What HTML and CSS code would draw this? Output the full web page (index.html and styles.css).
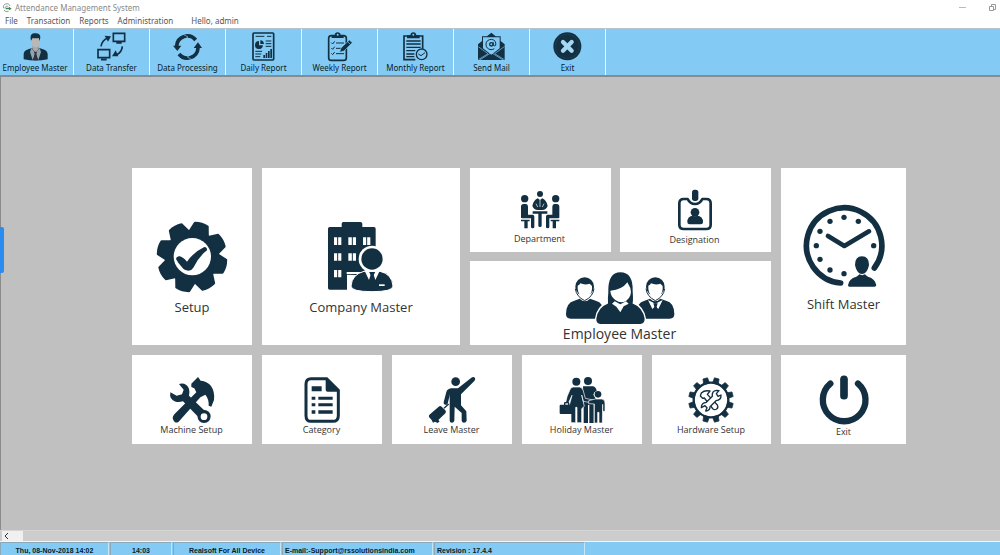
FILE: index.html
```html
<!DOCTYPE html>
<html lang="en">
<head>
<meta charset="utf-8">
<meta name="viewport" content="width=device-width, initial-scale=1">
<title>Attendance Management System</title>
<link rel="stylesheet" href="styles.css">
</head>
<body>
<div class="window">
  <header class="titlebar">
    <svg class="app-icon" viewBox="4 6 30 30" aria-hidden="true">
      <g fill="none" stroke="#8d9a9c" stroke-width="3"><path d="M9 22A10 10 0 0 1 28 15"/><path d="M13 22a6 6 0 0 1 10-5"/><path d="M10 28q6 6 14 3"/></g>
      <path d="M15 20h10v-3l8 6-8 5v-3H15z" fill="#3b8a4c"/>
    </svg>
    <h1 class="title">Attendance Management System</h1>
    <div class="controls">
      <button class="control" aria-label="Minimize"><svg viewBox="0 0 8 8" width="8" height="8"><path d="M0 3.5h7" stroke="#bbb" fill="none"/></svg></button>
      <button class="control" aria-label="Restore"><svg viewBox="0 0 8 8" width="8" height="8"><path d="M1.500 2.500h4v4h-4zM3.500 2.500V.5h4v5h-2" stroke="#999" fill="none"/></svg></button>
    </div>
  </header>

  <nav class="menu">
    <button class="menu-item">File</button>
    <button class="menu-item">Transaction</button>
    <button class="menu-item">Reports</button>
    <button class="menu-item">Administration</button>
    <span class="greeting">Hello, admin</span>
  </nav>

  <div class="toolbar" role="toolbar">
    <button class="tool tool-first">
      <svg class="tool-icon" viewBox="61 95 87 87">
        <path d="M69 177v-16q1-11 14-14l13-5h18l13 5q13 4 14 14v16q-36 7-72 0z" fill="#132f42"/>
        <path d="M95 133h19v13l-9 12-10-12z" fill="#a8a9a8"/>
        <path d="M92 143l12 15-8 21-8-24zM117 143l-12 15 8 21 8-24z" fill="#8ea4b0"/>
        <path d="M100 154h9l-2 7 3 19h-11l3-19z" fill="#3a2f3b"/>
        <path d="M92 115q12-13 26 0v10q-3 16-13 16t-13-16z" fill="#b9b8b5"/>
        <path d="M91 121q-5-19 8-22 20-3 20 12l-2 11-3-9q-10 2-18 0z" fill="#132f42"/>
      </svg>
      <span>Employee Master</span>
    </button>
    <button class="tool">
      <svg class="tool-icon" viewBox="290 95 87 87">
        <g fill="none" stroke="#132f42" stroke-width="5"><path d="M339 99h34v24h-34zM293 148h35v24h-35zM348 128h16M302 178h17"/><path d="M302 138q3-18 20-25M366 138q-1 17-18 26"/></g>
        <path d="M313 106l19 2-9 16zM335 168l11-18 8 18z" fill="#132f42"/>
      </svg>
      <span>Data Transfer</span>
    </button>
    <button class="tool">
      <svg class="tool-icon" viewBox="518 95 87 87">
        <g fill="none" stroke="#132f42" stroke-width="11"><path d="M529 137a32 32 0 0 1 57-18M593 143a32 32 0 0 1-57 18"/></g>
        <path d="M518 136h25l-12 16zM580 143h25l-12-17z" fill="#132f42"/><path d="M547 101l16 9-14 9M577 179l-16-9 14-9" fill="none" stroke="#83cbf4" stroke-width="2"/>
      </svg>
      <span>Data Processing</span>
    </button>
    <button class="tool">
      <svg class="tool-icon" viewBox="746 95 87 87">
        <rect x="758" y="98" width="62" height="81" rx="3" fill="none" stroke="#132f42" stroke-width="5"/>
        <path d="M776 122v13h12a12 12 0 1 1-12-13z" fill="#132f42"/><path d="M780 120v11h11q-1-10-11-11z" fill="#132f42"/>
        <path d="M766 108h26M800 108h13M796 122h17M796 130h17M796 138h17M765 153h20M765 161h18M765 169h15" stroke="#132f42" stroke-width="3" fill="none"/>
        <path d="M789 173v-9h5v9zM796 173v-15h5v15zM803 173v-21h5v21zM810 173v-27h5v27z" fill="#132f42"/>
      </svg>
      <span>Daily Report</span>
    </button>
    <button class="tool">
      <svg class="tool-icon" viewBox="72 95 87 87">
        <rect x="83" y="106" width="53" height="74" rx="8" fill="none" stroke="#132f42" stroke-width="5"/>
        <path d="M92 113v-9h9q1-8 9-8t9 8h9v9z" fill="#132f42"/><circle cx="110" cy="103" r="3" fill="#83cbf4"/>
        <path d="M91 127l4 4 6-8M91 143l4 4 6-8M91 159l4 4 6-8M105 128h24M105 144h16M105 160h24" fill="none" stroke="#132f42" stroke-width="3"/>
        <path d="M116 156l4-13 25-24 9 8-25 25z" fill="#132f42" stroke="#83cbf4" stroke-width="2"/><path d="M139 123l9 9" stroke="#83cbf4" stroke-width="2"/>
      </svg>
      <span>Weekly Report</span>
    </button>
    <button class="tool">
      <svg class="tool-icon" viewBox="302 95 87 87">
        <path d="M345 178h-34v-71h56v38" fill="none" stroke="#132f42" stroke-width="5"/>
        <path d="M320 114v-9h10q1-9 9-9t9 9h10v9z" fill="#132f42"/><circle cx="339" cy="103" r="3" fill="#83cbf4"/>
        <path d="M318 122h43M318 131h43M318 141h43M318 151h27M318 161h24M318 169h24" stroke="#132f42" stroke-width="4"/>
        <circle cx="364" cy="162" r="16" fill="#83cbf4" stroke="#132f42" stroke-width="4"/><path d="M354 161l8 5 12-9" fill="none" stroke="#132f42" stroke-width="3"/>
      </svg>
      <span>Monthly Report</span>
    </button>
    <button class="tool">
      <svg class="tool-icon" viewBox="530 95 87 87">
        <path d="M533 132l12-10v-14h15l13-11 13 11h15v14l12 10v47h-80z" fill="#132f42"/>
        <path d="M548 111h50v33l-25 19-25-19z" fill="#83cbf4"/>
        <path d="M534 139l29 21-29 18M612 139l-29 21 29 18M538 179l35-22 35 22" fill="none" stroke="#83cbf4" stroke-width="2"/>
        <circle cx="573" cy="132" r="5" fill="none" stroke="#132f42" stroke-width="4"/>
        <path d="M579 126v8q2 6 7 1 3-15-12-18-17 1-17 15t15 16q6 0 10-3" fill="none" stroke="#132f42" stroke-width="3"/>
      </svg>
      <span>Send Mail</span>
    </button>
    <button class="tool">
      <svg class="tool-icon" viewBox="757 95 87 87"><circle cx="800" cy="138" r="42" fill="#132f42"/><circle cx="800" cy="138" r="36" fill="none" stroke="#31556c" stroke-width="1"/><path d="M787 125l26 26M813 125l-26 26" stroke="#a5d8f5" stroke-width="13" stroke-linecap="round"/></svg>
      <span>Exit</span>
    </button>
  </div>

  <main class="workspace">
    <button class="side-handle" aria-label="Open side panel"></button>
    <div class="tiles">
      <div class="row row-top">
        <button class="tile tile-tall">
          <svg width="72" height="72" viewBox="78 167 216 216" fill="#132f42">
            <defs><path id="tooth" d="M156 207l10-33q20-6 40 0l10 33z" stroke="#132f42" stroke-width="6" stroke-linejoin="round"/></defs>
            <circle cx="186" cy="275" r="82"/>
            <g><use href="#tooth" transform="rotate(16 186 275)"/><use href="#tooth" transform="rotate(61 186 275)"/><use href="#tooth" transform="rotate(106 186 275)"/><use href="#tooth" transform="rotate(151 186 275)"/><use href="#tooth" transform="rotate(196 186 275)"/><use href="#tooth" transform="rotate(241 186 275)"/><use href="#tooth" transform="rotate(286 186 275)"/><use href="#tooth" transform="rotate(331 186 275)"/></g>
            <circle cx="187" cy="274" r="56" fill="#fff"/>
            <path d="M138 281q2-9 12-8 9 3 21 16 20-29 52-44 9 0 8 10-25 19-41 52-4 8-15 9-12 0-19-10-12-13-18-25z"/>
          </svg>
          <span>Setup</span>
        </button>
        <button class="tile tile-tall">
          <svg width="66" height="72" viewBox="595 167 198 216" fill="#132f42">
            <path d="M595 190q0-5 5-5h36v-10q0-5 5-5h51q6 0 6 5v10h35q5 0 5 5v80l-30 60-56-2v45h-52q-5 0-5-5z"/>
            <path d="M613 216h22v23h-22zM656 216h23v23h-23zM700 216h22v23h-22zM613 264h22v22h-22zM656 264h23v22h-23zM613 314h22v22h-22z" fill="#fff"/>
            <path d="M624 214v125M668 214v75M711 214v27" stroke="#132f42" stroke-width="3"/>
            <path d="M651 320h50v6h-50z" fill="#fff"/><path d="M652 334h20l-8 40h-12z" fill="#fff"/>
            <circle cx="727" cy="281" r="40" fill="#fff"/><circle cx="727" cy="281" r="32"/>
            <path d="M727 379q-63 0-63-17 3-35 39-44h48q36 8 39 44 0 17-63 17z" stroke="#fff" stroke-width="3"/>
            <path d="M704 315l14 29 5-16-5-9h19l-5 9 5 16 14-29z" fill="#fff"/><path d="M720 322h15l-5 9 5 28-8 12-7-12 4-28z"/><path d="M748 357h17v5h-17z" fill="#fff"/>
          </svg>
          <span>Company Master</span>
        </button>
        <div class="cluster">
          <button class="tile tile-mini tile-department">
            <svg width="40" height="40" viewBox="165 76 120 120" fill="#132f42">
              <circle cx="179" cy="102" r="11"/><circle cx="272" cy="102" r="11"/><circle cx="225" cy="88" r="9"/>
              <path d="M168 159v-33q0-8 8-8h7q6 0 6 8v24h14q5 0 5 6v31q0 4-5 4t-5-4v-26h-27zM283 159v-33q0-8-8-8h-7q-6 0-6 8v24h-14q-5 0-5 6v31q0 4 5 4t5-4v-26h27z"/>
              <path d="M168 165h26v5h-6v21h-10v-21h-10zM283 165h-26v5h6v21h10v-21h10zM203 140h44v7h-17v36q0 4-5 4t-5-4v-36h-17z"/>
              <path d="M202 124q3-17 16-23l7 5 7-5q13 6 16 23-5 12-16 12h-14q-11 0-16-12z"/><path d="M213 117l5 10M237 117l-5 10M225 105v22" stroke="#fff" stroke-width="2"/>
            </svg>
            <span>Department</span>
          </button>
          <button class="tile tile-mini">
            <svg width="36" height="42" viewBox="636 71 108 126" fill="#132f42">
              <path d="M668 101h-12q-13 0-13 13v64q0 13 13 13h68q13 0 13-13v-64q0-13-13-13h-12q-7 15-22 15t-22-15z" fill="none" stroke="#132f42" stroke-width="8" stroke-linejoin="round"/>
              <rect x="681" y="73" width="19" height="34" rx="8"/><circle cx="690" cy="141" r="13"/>
              <path d="M667 171q0-20 17-20 6 3 12 0 18 0 18 20 0 6-7 6h-33q-7 0-7-6z"/>
            </svg>
            <span>Designation</span>
          </button>
          <button class="tile tile-wide">
            <svg width="110" height="54" viewBox="300 317 330 162" fill="#132f42">
              <defs><path id="bust" d="M303 446q0-34 25-40l16-6q16 15 31 0l17 6q25 6 25 40 0 14-14 14h-86q-14 0-14-14z"/></defs>
              <use href="#bust"/><circle cx="359" cy="364" r="28"/><path d="M338 361q7-3 8-7 14 6 28 1l7 7v9q-1 20-21 31-20-10-22-31z" fill="#fff"/><path d="M331 370q3 24 28 36 25-12 28-36" fill="none" stroke="#132f42" stroke-width="3"/>
              <use href="#bust" x="211"/><circle cx="571" cy="364" r="28"/><path d="M550 361q7-3 8-7 14 6 28 1l7 7v9q-1 20-21 31-20-10-22-31z" fill="#fff"/><path d="M543 370q3 24 28 36 25-12 28-36" fill="none" stroke="#132f42" stroke-width="3"/>
              <path d="M549 404l13 27 9-8 9 8 13-27-22 11z" fill="#fff"/><path d="M565 414h13l-3 10 4 20-7 15-8-15 4-20z"/>
              <path d="M466 478h-60q-15-2-14-18 5-36 35-47-1-16 1-32-2-62 38-62 41 0 39 59 2 25 0 35 30 11 36 47 0 16-15 18z" stroke="#fff" stroke-width="4"/>
              <path d="M436 376q36-3 51-25l9 17q7 25-13 39-16 9-32-3-15-12-15-28z" fill="#fff"/><path d="M441 415l8-7 17 9 17-9 8 7-15 8-10 18-12-17z" fill="#fff"/>
            </svg>
            <span>Employee Master</span>
          </button>
        </div>
        <button class="tile tile-shift">
          <svg width="82" height="84" viewBox="97 118 246 252" fill="#132f42">
            <path d="M210 355A113 113 0 1 1 311 310" fill="none" stroke="#132f42" stroke-width="17" stroke-linecap="round"/>
            <path d="M172 214l49 30 74-44" fill="none" stroke="#132f42" stroke-width="14" stroke-linecap="round" stroke-linejoin="round"/>
            <circle cx="220" cy="158" r="8"/><circle cx="263" cy="170" r="8"/><circle cx="178" cy="170" r="8"/><circle cx="148" cy="200" r="8"/><circle cx="137" cy="243" r="8"/><circle cx="148" cy="284" r="8"/><circle cx="178" cy="316" r="8"/><circle cx="220" cy="327" r="8"/><circle cx="309" cy="243" r="8"/>
            <path d="M274 275q21 0 21 26-4 19-13 25-8 4-16 0-9-6-13-25 0-26 21-26zM232 362q2-20 25-26 8-4 9-7 9 5 17 0 3 4 9 7 22 6 25 26-2 4-5 4h-76q-4 0-4-4z"/>
          </svg>
          <span>Shift Master</span>
        </button>
      </div>
      <div class="row row-bottom">
        <button class="tile tile-small">
          <svg width="46" height="46" viewBox="117 80 138 138" fill="#132f42">
            <path d="M121 126q-4 23 16 28 9 3 22-1l43 44q2 20 20 21 19 0 20-20-1-18-21-20l-44-42q5-22-8-32-10-7-22-3l14 17-5 14-16 4z"/>
            <circle cx="222" cy="199" r="10" fill="#fff"/>
            <path d="M128 203q0-5 5-11l66-66-6-12-9-4v-10l20-20 8 11q21 2 31 16 12 17 9 42l-8 20-8-3q1-20-10-33l-15 8-65 73q-6 5-12 1-5-5-6-12z"/>
          </svg><span>Machine Setup</span>
        </button>
        <button class="tile tile-small">
          <svg width="46" height="46" viewBox="507 80 138 138" fill="#132f42">
            <path d="M543 85h47l35 35v76q0 17-17 17h-65q-15 0-15-17V101q0-16 15-16z" fill="#fff" stroke="#132f42" stroke-width="9"/>
            <path d="M587 85l41 39h-35q-6 0-6-6zM545 108h30v15h-30zM545 139h11v9h-11zM565 139h43v9h-43zM545 159h11v9h-11zM565 159h43v9h-43zM545 180h11v10h-11zM565 180h43v10h-43z"/>
          </svg><span>Category</span>
        </button>
        <button class="tile tile-small">
          <svg width="46" height="46" viewBox="122 80 138 138" fill="#132f42">
            <circle cx="202" cy="94" r="13"/>
            <path d="M188 114h21l40-32q7-5 11 1 2 5-2 9l-40 40v33l16 18 1 28q-2 6-8 6t-7-6v-23l-21-19-1 42q-2 6-7 6-7 0-7-6v-72l1-8-7 29q-3 5-8 3-5-2-4-7l8-31q3-9 14-11z"/>
            <path d="M181 161l-14 13" stroke="#132f42" stroke-width="4"/><path d="M125 192l26-23q5-4 9 0l11 11q4 5 0 9l-21 20 4 4-6 5-8-4-6 3-4-8-8-9q-2-4 3-8z"/>
          </svg><span>Leave Master</span>
        </button>
        <button class="tile tile-small">
          <svg width="46" height="46" viewBox="510 80 138 138" fill="#132f42">
            <circle cx="597" cy="92" r="12"/><path d="M582 108h30q9 2 11 13-9 3-10 12l8 14-7 8v63h-13v-54h-4v54h-13v-59z"/>
            <circle cx="562" cy="94" r="12"/>
            <path d="M553 110h18q10 1 12 12l6 22 24 5-2 9-28-5-5-19 8 34-8 7v42h-14v-46h-4v46h-14v-48l-5-4 8-30-12 26h-8q4-25 14-43 3-8 10-8z" stroke="#fff" stroke-width="2"/>
            <path d="M515 163h10v-5q0-3 4-3h8q4 0 4 3v5h9q3 0 3 3v22q0 3-3 3h-35q-3 0-3-3v-22q0-3 3-3z"/><path d="M529 159h8v4h-8z" fill="#fff"/>
            <circle cx="627" cy="132" r="10"/><path d="M619 146h20q9 2 9 12v25h-7v-21l-1 56h-10v-32h-4v32h-10v-57l-17-1v-9z" stroke="#fff" stroke-width="2"/>
          </svg><span>Holiday Master</span>
        </button>
        <button class="tile tile-small">
          <svg width="46" height="46" viewBox="129 80 138 138" fill="#132f42">
            <defs><path id="cog" d="M189 99l2-17h14l2 17z" stroke="#132f42" stroke-width="2" stroke-linejoin="round"/></defs>
            <circle cx="198" cy="149" r="52" fill="none" stroke="#132f42" stroke-width="7"/>
            <g><use href="#cog" transform="rotate(15 198 149)"/><use href="#cog" transform="rotate(45 198 149)"/><use href="#cog" transform="rotate(75 198 149)"/><use href="#cog" transform="rotate(105 198 149)"/><use href="#cog" transform="rotate(135 198 149)"/><use href="#cog" transform="rotate(165 198 149)"/><use href="#cog" transform="rotate(195 198 149)"/><use href="#cog" transform="rotate(225 198 149)"/><use href="#cog" transform="rotate(255 198 149)"/><use href="#cog" transform="rotate(285 198 149)"/><use href="#cog" transform="rotate(315 198 149)"/><use href="#cog" transform="rotate(345 198 149)"/></g>
            <g fill="#fff" stroke="#132f42" stroke-width="4" stroke-linejoin="round">
              <path d="M166 137l3-9q9-9 26-6l-8 10 30 32q4 8-2 12t-11 0l-26-33-5 1z"/>
              <path d="M169 172q0-15 15-16l18-18q-2-16 12-18l8 1-8 9 5 8 9-4q1 15-15 17l-18 18q0 12-13 13l4-10-6-6z"/>
            </g>
          </svg><span>Hardware Setup</span>
        </button>
        <button class="tile tile-exit">
          <svg width="50" height="49" viewBox="520 76 150 147"><path d="M554 103a64 64 0 1 0 83 0" fill="none" stroke="#132f42" stroke-width="19" stroke-linecap="round" transform="translate(0 -1)"/><path d="M595 89v49" stroke="#132f42" stroke-width="23" stroke-linecap="round"/></svg>
          <span>Exit</span>
        </button>
      </div>
    </div>
  </main>

  <div class="scrollbar">
    <button class="scroll-left" aria-label="Scroll left"><svg width="5" height="6" viewBox="0 0 5 6"><path d="M4 0L1 3 4 6" fill="none" stroke="#333"/></svg></button>
  </div>

  <footer class="status">
    <span class="panel panel-date">Thu, 08-Nov-2018 14:02</span>
    <span class="panel panel-time">14:03</span>
    <span class="panel panel-device">Realsoft For All Device</span>
    <span class="panel panel-mail">E-mail:-Support@rssolutionsindia.com</span>
    <span class="panel panel-revision">Revision : 17.4.4</span>
  </footer>
</div>
</body>
</html>
```
FILE: styles.css
```css
* { box-sizing: border-box; }

body {
  margin: 0;
  background: #fff;
  color: #333;
  font-family: "Open Sans", "Noto Sans", sans-serif;
}

button {
  margin: 0;
  padding: 0;
  border: 0;
  background: transparent;
  color: inherit;
  font: inherit;
  white-space: nowrap;
}

svg { display: block; flex: none; overflow: visible; }

.window {
  display: flex;
  flex-direction: column;
  min-height: 100vh;
}

.titlebar {
  display: flex;
  align-items: center;
  height: 15px;
  padding: 0 4px 0 2px;
}

.app-icon { width: 10px; height: 10px; }

.title {
  flex: 1;
  margin: 0 0 0 3px;
  color: #8a8a8a;
  font-family: "Noto Sans", sans-serif;
  font-size: 8px;
  font-weight: 400;
  line-height: 14px;
}

.controls { display: flex; gap: 21px; }
.control { display: flex; }

.menu {
  display: flex;
  align-items: center;
  gap: 9px;
  height: 13px;
  padding: 0 0 1px 5px;
  color: #555;
  font-family: "Noto Sans", sans-serif;
  font-size: 8px;
  line-height: 12px;
}

.greeting { margin-left: 9px; }

.toolbar {
  display: flex;
  height: 49px;
  border-top: 1px solid #b5c4cd;
  border-bottom: 2px solid #858b8f;
  background: #83cbf4;
}

.tool {
  display: flex;
  flex-direction: column;
  align-items: center;
  width: 76px;
  padding-top: 3px;
  border-right: 1px solid #f0f9fe;
  color: #0b1c28;
  font-family: "Noto Sans", sans-serif;
  font-size: 8px;
  line-height: 12px;
}

.tool-first { width: 74px; padding-right: 3px; }
.tool-icon { width: 29px; height: 29px; margin-bottom: 1px; }

.workspace {
  position: relative;
  flex: 1;
  padding: 91px 94px 84px 131px;
  border-left: 1px solid #8b8b8b;
  background: #c0c0c0;
}

.side-handle {
  position: absolute;
  top: 150px;
  left: -1px;
  width: 4px;
  height: 46px;
  border-radius: 0 2px 2px 0;
  background: #2a8cf0;
}

.tiles { display: grid; gap: 10px; }
.row { display: grid; column-gap: 10px; }
.row-top { grid-template-columns: 120fr 198fr 301fr 125fr; }
.row-bottom { grid-template-columns: 120fr 120fr 120fr 120fr 119fr 125fr; }

.cluster {
  display: grid;
  grid-template-columns: 141fr 151fr;
  grid-template-rows: 84px 84px;
  gap: 9px;
}

.tile {
  display: flex;
  flex-direction: column;
  align-items: center;
  background: #fff;
  font-size: 13px;
  line-height: 18px;
}

.tile-tall { padding-top: 53px; gap: 5px; }
.tile-shift { padding-top: 36px; gap: 7px; }
.tile-mini { padding: 21px 2px 0 0; gap: 3px; font-size: 9px; line-height: 12px; }
.tile-department { padding-top: 22px; }
.tile-wide { grid-column: 1 / -1; padding: 10px 2px 0 0; font-size: 14px; }
.tile-small { height: 89px; padding: 22px 1px 0 0; gap: 1px; font-size: 9px; line-height: 12px; }
.tile-exit { padding-top: 20px; gap: 2px; font-size: 9px; line-height: 12px; }

.scrollbar {
  display: flex;
  height: 11px;
  padding-left: 2px;
  border-top: 1px solid #d6d6d6;
  background: #cdcdcd;
}

.scroll-left {
  display: flex;
  align-items: center;
  width: 21px;
  padding-left: 2px;
  background: #f0f0f0;
}

.status {
  display: flex;
  gap: 1px;
  height: 14px;
  border-top: 1px solid #f4f4f4;
  background: #83cbf4;
  color: #0b1c28;
  font-family: "Liberation Sans", Arial, sans-serif;
  font-size: 7px;
  font-weight: 700;
  line-height: 15px;
  text-align: center;
  white-space: nowrap;
}

.panel {
  border-top: 1px solid #8aa9bb;
  border-left: 1px solid #8aa9bb;
  border-right: 1px solid #c4e6f8;
}

.panel-date { width: 109px; }
.panel-time { width: 62px; }
.panel-device { width: 108px; }
.panel-mail { width: 151px; padding-left: 2px; text-align: left; }
.panel-revision { width: 151px; padding-left: 2px; text-align: left; }
```
